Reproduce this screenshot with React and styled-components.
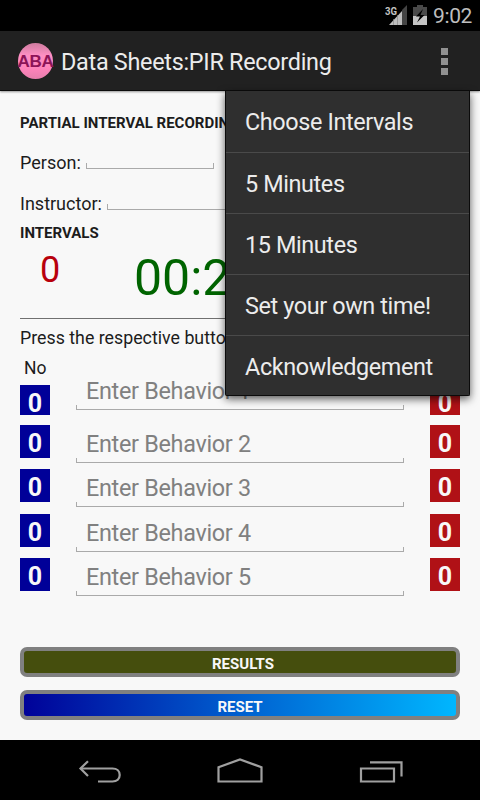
import React from "react";
import styled, { createGlobalStyle } from "styled-components";

const behaviors = [
  { id: 1, gap: 10, height: 30, lift: 13 },
  { id: 2, gap: 11, height: 33, lift: 0 },
  { id: 3, gap: 12, height: 33, lift: 0 },
  { id: 4, gap: 11, height: 33, lift: 0 },
  { id: 5, gap: 0, height: 33, lift: 0 },
];

const menuItems = [
  "Choose Intervals",
  "5 Minutes",
  "15 Minutes",
  "Set your own time!",
  "Acknowledgement",
];

export default function App() {
  return (
    <Screen>
      <GlobalStyle />
      <StatusBar>
        <StatusIcons />
        <Clock>9:02</Clock>
      </StatusBar>
      <ActionBar>
        <Logo>ABA</Logo>
        <Title>Data Sheets:PIR Recording</Title>
        <Overflow>
          <Dot />
          <Dot />
          <Dot />
        </Overflow>
        <Menu>
          {menuItems.map((label) => (
            <MenuItem key={label}>{label}</MenuItem>
          ))}
        </Menu>
      </ActionBar>
      <Sheet>
        <Heading>PARTIAL INTERVAL RECORDING</Heading>
        <Field $top={18}>
          Person:
          <Line $width={128} $gap={5} />
        </Field>
        <Field $top={17}>
          Instructor:
          <Line $width={128} $gap={5} />
        </Field>
        <Heading $top={7}>INTERVALS</Heading>
        <Counters>
          <Count>0</Count>
          <Timer>00:25</Timer>
        </Counters>
        <Hint>Press the respective button</Hint>
        <ColumnLabel>No</ColumnLabel>
        {behaviors.map((b) => (
          <Row key={b.id} $gap={b.gap} $height={b.height}>
            <Tally $color="#000098">0</Tally>
            <Behavior $lift={b.lift}>Enter Behavior {b.id}</Behavior>
            <Tally $color="#b01116">0</Tally>
          </Row>
        ))}
        <Buttons>
          <Button $fill="#454e0d" $shift={6}>
            RESULTS
          </Button>
          <Button $fill="linear-gradient(90deg, #000098, #0060d0 50%, #00b8ff)">
            RESET
          </Button>
        </Buttons>
      </Sheet>
      <NavBar />
    </Screen>
  );
}

function StatusIcons() {
  return (
    <svg width="44" height="31" viewBox="384 0 44 31">
      <text
        x="385"
        y="14.5"
        fill="#c4c4c4"
        fontSize="11"
        fontWeight="700"
        textLength="12"
        lengthAdjust="spacingAndGlyphs"
      >
        3G
      </text>
      <path d="M402 25V10L407 5V25Z" fill="#444" />
      <path d="M389 25L402 11V25Z" fill="#bdbdbd" />
      <path d="M393.5 19V25M397.5 15V25" stroke="#888" strokeWidth="0.7" />
      <path d="M413 7H417V5H423V7H427V16H413Z" fill="#4a4a4a" />
      <path d="M413 16H427V25H413Z" fill="#c4c4c4" />
      <path d="M423 9L416 16.5H420L417 22.5L424.5 15H420.5Z" fill="#000" />
    </svg>
  );
}

function NavBar() {
  return (
    <Nav>
      <svg
        width="480"
        height="60"
        viewBox="0 740 480 60"
        fill="none"
        stroke="#a0a0a0"
        strokeWidth="2.2"
      >
        <path d="M80.500 768.500H112.500C117 768.500 119.700 771.200 119.700 775S117 781.500 112.500 781.500H98" />
        <path d="M88 761.200L80.500 768.500L88 776" />
        <path d="M218.500 781.500V767.200L240 759.500L261.500 767.200V781.500Z" />
        <path d="M361 768.500H394V781.500H361Z" />
        <path d="M370 762.300H401.500V776.500" />
      </svg>
    </Nav>
  );
}

const GlobalStyle = createGlobalStyle`
  body {
    margin: 0;
    background: #000;
    font-family: Roboto, sans-serif;
  }
`;
const Screen = styled.div`
  width: 480px;
  height: 800px;
  display: flex;
  flex-direction: column;
  overflow: hidden;
`;
const StatusBar = styled.div`
  height: 31px;
  flex: none;
  display: flex;
  justify-content: flex-end;
  padding-right: 8px;
  background: #000;
`;
const Clock = styled.div`
  margin-left: 5px;
  font-size: 21px;
  letter-spacing: -0.4px;
  line-height: 33px;
  color: #bebebe;
`;
const ActionBar = styled.div`
  position: relative;
  z-index: 1;
  height: 60px;
  flex: none;
  box-sizing: border-box;
  display: flex;
  align-items: center;
  padding: 1px 31px 0 18px;
  background: #212121;
  border-bottom: 1px solid #0c0c0c;
  box-shadow: 0 1px 2px rgba(0, 0, 0, 0.4);
`;
const Logo = styled.div`
  width: 35px;
  height: 36px;
  padding-top: 2px;
  box-sizing: border-box;
  border-radius: 50%;
  display: flex;
  align-items: center;
  justify-content: center;
  font: 700 17px "Liberation Sans", sans-serif;
  letter-spacing: -0.3px;
  color: #8d1458;
  background: linear-gradient(#cf7c9f, #ff8fc4 35%, #ff83bb 70%, #e77eac);
`;
const Title = styled.div`
  margin-left: 8px;
  padding-top: 2px;
  flex: 1;
  font-size: 23.4px;
  letter-spacing: -0.28px;
  line-height: 30px;
  white-space: nowrap;
  color: #ececec;
`;
const Overflow = styled.div`
  display: grid;
  gap: 3px;
  margin-right: 1px;
`;
const Dot = styled.div`
  width: 7px;
  height: 7px;
  background: #919191;
`;
const Menu = styled.div`
  position: absolute;
  top: 60px;
  right: 10px;
  width: 245px;
  height: 305px;
  box-sizing: border-box;
  border: 1px solid #0b0b0b;
  border-top: 0;
  border-radius: 0 0 2px 2px;
  background: #2f2f2f;
  box-shadow: 0 3px 8px rgba(0, 0, 0, 0.65);
`;
const MenuItem = styled.div`
  height: 61px;
  box-sizing: border-box;
  padding-left: 19px;
  font-size: 23.4px;
  letter-spacing: -0.38px;
  line-height: 63px;
  white-space: nowrap;
  color: #ececec;
  & + & {
    border-top: 1px solid #4a4a4a;
  }
`;
const Sheet = styled.div`
  height: 649px;
  flex: none;
  box-sizing: border-box;
  display: flex;
  flex-direction: column;
  padding: 22px 20px 0;
  background: #f8f8f8;
  color: #1c1c1c;
`;
const Heading = styled.div`
  margin-top: ${(props) => props.$top || 0}px;
  font-size: 15px;
  font-weight: 700;
  line-height: 20px;
  white-space: nowrap;
`;
const Field = styled.div`
  margin-top: ${(props) => props.$top}px;
  height: 24px;
  display: flex;
  font-size: 18px;
  line-height: 24px;
`;
// underline with a short tick at both ends
const Line = styled.div`
  width: ${(props) => props.$width}px;
  height: 6px;
  margin: 12px 0 0 ${(props) => props.$gap}px;
  border: solid #aaa;
  border-width: 0 1px 1px;
  box-sizing: border-box;
`;
const Counters = styled.div`
  height: 76px;
  box-sizing: border-box;
  display: flex;
  padding: 7px 0 0 20px;
  border-bottom: 1px solid #707070;
`;
const Count = styled.div`
  width: 94px;
  font-size: 36px;
  line-height: 40px;
  color: #b8000c;
`;
const Timer = styled.div`
  font-size: 50px;
  line-height: 56px;
  color: #006400;
`;
const Hint = styled.div`
  margin-top: 8px;
  font-size: 17.8px;
  line-height: 22px;
  white-space: nowrap;
`;
const ColumnLabel = styled.div`
  margin: 8px 0 6px 4px;
  font-size: 17.5px;
  line-height: 22px;
`;
const Row = styled.div`
  display: flex;
  height: ${(props) => props.$height}px;
  margin-bottom: ${(props) => props.$gap}px;
`;
const Tally = styled.div`
  width: 30px;
  height: 100%;
  font-size: 25px;
  font-weight: 700;
  line-height: 37px;
  text-align: center;
  color: #f8f8f8;
  background: ${(props) => props.$color};
`;
const Behavior = styled.div`
  width: 328px;
  height: 38px;
  box-sizing: border-box;
  margin: ${(props) => -props.$lift}px 26px 0;
  padding-left: 10px;
  font-size: 23.4px;
  letter-spacing: -0.3px;
  line-height: 39px;
  color: #808080;
  background:
    linear-gradient(#aaa, #aaa) 0 100% / 1px 5px no-repeat,
    linear-gradient(#aaa, #aaa) 100% 100% / 1px 5px no-repeat,
    linear-gradient(#aaa, #aaa) 0 100% / 100% 1px no-repeat;
`;
const Buttons = styled.div`
  display: grid;
  gap: 13px;
  margin-top: 56px;
`;
const Button = styled.div`
  height: 30px;
  box-sizing: border-box;
  border: 4px solid #808080;
  border-radius: 7px;
  padding-left: ${(props) => props.$shift || 0}px;
  font-size: 15px;
  font-weight: 700;
  line-height: 27px;
  text-align: center;
  color: #f8f8f8;
  background: ${(props) => props.$fill};
  background-origin: border-box;
`;
const Nav = styled.div`
  height: 60px;
  flex: none;
  background: #000;
`;
